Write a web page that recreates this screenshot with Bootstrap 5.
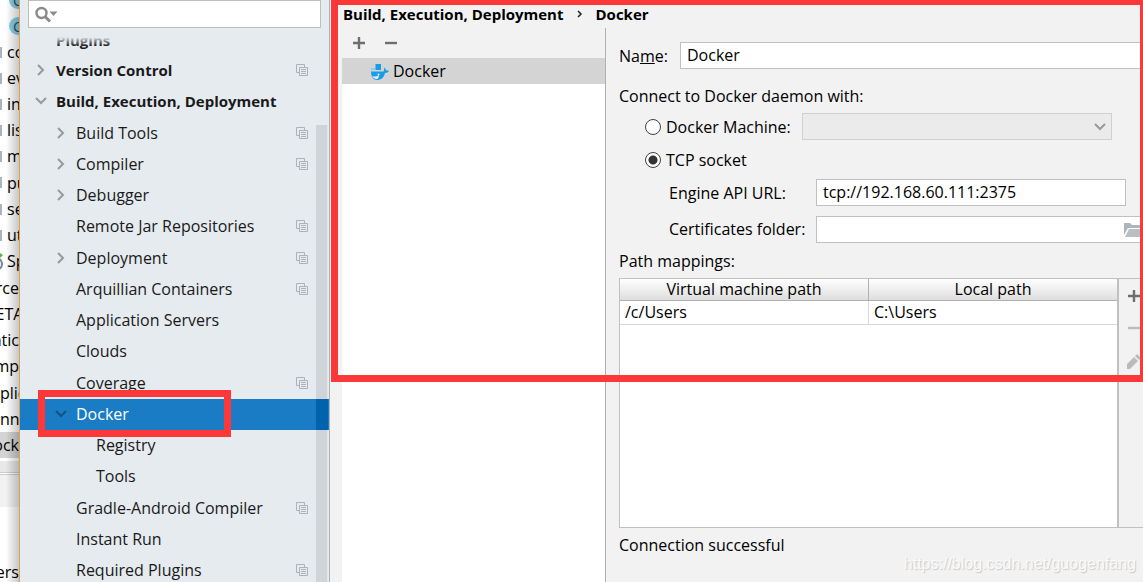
<!DOCTYPE html>
<html lang="en">
<head>
<meta charset="utf-8">
<meta name="viewport" content="width=device-width, initial-scale=1">
<title>Settings - Docker</title>
<link href="https://cdn.jsdelivr.net/npm/bootstrap@5.3.0/dist/css/bootstrap.min.css" rel="stylesheet">
<style>
  body { font: 16px/24px "Open Sans", "Noto Sans", sans-serif; color: #000; background: #f2f2f2; }
  a { color: inherit; text-decoration: none; }
  svg { display: block; flex: none; }

  /* project window behind the dialog */
  .backdrop-strip { width: 20px; border-right: 1px solid #d9a35c; background: #fff; }
  .backdrop-strip::after { content: ""; position: absolute; inset: 0; background: linear-gradient(to right, transparent 30%, rgba(0,0,0,.22)); }
  .file-row { height: 26px; white-space: nowrap; overflow: hidden; }
  .file-row.roomy { height: 27px; }
  .file-row.cut { justify-content: flex-end; }
  .file-row.picked { background: #d4d4d4; }
  .file-row.tail { margin-top: 52px; }
  .folder-edge { width: 2px; height: 11px; background: #a9b4bd; margin-right: 5px; flex: none; }
  .class-dot { width: 18px; height: 18px; border-radius: 50%; background: #86cfe6; margin-left: 9px; flex: none; font-size: 15px; line-height: 18px; padding-left: 4px; color: #3a4a52; }
  .first-class { height: 13px; }
  .strip-bar { height: 12px; background: #e8e8e8; border-bottom: 1px solid #ccc; margin-top: 3px; }
  .strip-tools { height: 33px; background: #f2f2f2; border-top: 1px solid #ccc; margin-top: 1px; }

  /* settings tree */
  .settings-nav { width: 310px; background: #e6ebef; border-right: 1px solid #b0b3b6; }
  .search-box { height: 28px; margin: 0 8px; background: #fff; border: 1px solid #bcbfc1; padding-left: 6px; }
  .search-box input { border: 0; outline: 0; background: none; min-width: 0; flex: 1; }
  .tree { margin: 9px 0 0; color: #1a1a1a; }
  .tree a { height: 31px; line-height: 28px; padding: 0 21px 1px 36px; }
  .tree li:nth-child(4n) a { height: 32px; }
  .tree li.sub a { padding-left: 56px; }
  .tree li.subsub a { padding-left: 76px; }
  .tree .twist { width: 16px; margin-left: -21px; margin-right: 5px; color: #999; }
  .tree li.fw-bold, .crumbs { font-size: 15px; }
  .tree li.clipped a { height: 18px; align-items: flex-end !important; overflow: hidden; }
  .tree li.clipped::after { content: ""; position: absolute; inset: 0; background: linear-gradient(#e6ebef, transparent 50%); }
  .tree li.current { background: #1a7cc4; color: #fff; }
  .tree li.current .twist { color: #15527f; }
  .scroll-thumb { right: 1px; top: 125px; bottom: 0; width: 12px; background: rgba(160,165,168,.32); border-right: 1px solid rgba(255,255,255,.4); }
  .tree li.current::after { content: ""; position: absolute; right: 1px; top: 0; bottom: 0; width: 12px; background: #0063ad; z-index: 2; }

  /* red marker frames */
  .frame { border: 7px solid #fc3838; pointer-events: none; z-index: 5; }
  .frame-item { left: 18px; top: -9px; width: 193px; height: 47px; }
  .frame-main { left: 1px; right: 0; top: 0; height: 382px; border-width: 5px 3px 7px 7px; }

  .crumbs { height: 28px; padding-left: 13px; font-weight: 700; gap: 13px; }
  .master { width: 264px; margin-left: 12px; background: #fff; border-right: 1px solid #b0b0b0; }
  .master-tools { height: 30px; background: #f2f2f2; padding-left: 11px; gap: 20px; color: #6e6e6e; }
  .plain { border: 0; background: none; padding: 0; color: inherit; }
  .master-item { height: 26px; background: #d4d4d4; padding-left: 29px; gap: 4px; }

  .detail { padding: 14px 0 0 13px; min-width: 0; }
  .field, .combo { height: 27px; border: 1px solid #c0c0c0; border-radius: 0; background-color: #fff; padding: 0 6px 1px; font: inherit; color: #000; min-width: 0; flex: 1; }
  .combo { border-color: #d0d0d0; margin-right: 31px; appearance: none;
    background: #ebebeb url("data:image/svg+xml,%3Csvg xmlns='http://www.w3.org/2000/svg' width='12' height='8'%3E%3Cpath d='M1 1l5 5 5-5' fill='none' stroke='%23999' stroke-width='2'/%3E%3C/svg%3E") no-repeat right 5px center; opacity: 1; }
  .name-label { width: 61px; }
  .daemon-caption { margin-top: 15px; }
  .radio-row { height: 27px; padding-left: 26px; margin-top: 5px; }
  .radio-row + .radio-row, .engine-row { margin-top: 6px; }
  .cert-row { margin-top: 10px; }
  .cert-row label { padding-bottom: 1px; }
  .radio-row input { appearance: none; width: 16px; height: 16px; margin: 0 5px 0 0; border: 1px solid #404040; border-radius: 50%; background: #fff; }
  .radio-row input:checked { background: radial-gradient(circle, #333 4px, #fff 5px); }
  .machine-label { width: 136px; }
  .sub-label { width: 197px; padding-left: 50px; }
  .engine { margin-right: 17px; }
  .browse { right: 0; top: 6px; width: 19px; overflow: hidden; }
  .map-caption { margin-top: 6px; }

  .mappings { height: 250px; border: 1px solid #c0c0c0; border-right: 0; margin-top: 5px; }
  .map-table { background: #fff; border-right: 2px solid #c0c0c0; }
  .map-table table { width: 100%; table-layout: fixed; line-height: 20px; }
  .map-table th { height: 21px; padding: 0; font-weight: 400; text-align: center; background: linear-gradient(#fff, #dedede); border-bottom: 1px solid #b0b0b0; }
  .map-table td { height: 24px; padding: 1px 5px 2px; border-bottom: 1px solid #d8d8d8; }
  .map-table th + th { border-left: 1px solid #b0b0b0; }
  .map-table td + td { border-left: 1px solid #d8d8d8; }
  .map-tools { width: 24px; padding: 11px 0 0 8px; gap: 20px; overflow: hidden; color: #bbb; }
  .map-tools .ready { color: #6e6e6e; }
  .status { margin-top: 5px; }
  .watermark { right: 7px; bottom: 6px; font: 16px/24px "Liberation Sans", sans-serif; color: #fafafa; text-shadow: 1px 1px 1px #c8c8c8; }
</style>
</head>
<body>
<svg width="0" height="0" class="position-absolute" aria-hidden="true">
  <symbol id="chev-right" viewBox="0 0 12 12"><path d="M3 1l5 5-5 5" fill="none" stroke="#999" stroke-width="2"/></symbol>
  <symbol id="chev-down" viewBox="0 0 12 12"><path d="M1 3l5 5 5-5" fill="none" stroke="currentColor" stroke-width="2"/></symbol>
  <symbol id="copy" viewBox="0 0 12 12"><path d="M3 8.500H.500V.500H8.500V3" fill="none" stroke="#aab3ba"/><path d="M3.500 3.500h8v8h-8z" fill="#e6ebef" stroke="#aab3ba"/><path d="M5 5.500h5M5 7.500h5M5 9.500h5" stroke="#aab3ba"/></symbol>
  <symbol id="plus" viewBox="0 0 12 12"><path d="M0 6h12M6 0v12" stroke="currentColor" stroke-width="2.400"/></symbol>
  <symbol id="minus" viewBox="0 0 12 12"><path d="M0 6h12" stroke="currentColor" stroke-width="2.400"/></symbol>
</svg>

<div class="d-flex vh-100 overflow-hidden">
  <aside class="backdrop-strip position-relative flex-shrink-0 overflow-hidden" aria-hidden="true">
    <div class="file-row first-class d-flex align-items-end"><span class="class-dot mb-1">C</span></div>
    <div class="file-row d-flex align-items-center"><span class="class-dot">C</span></div>
    <div class="file-row d-flex align-items-center"><i class="folder-edge"></i>co</div>
    <div class="file-row d-flex align-items-center"><i class="folder-edge"></i>ev</div>
    <div class="file-row d-flex align-items-center"><i class="folder-edge"></i>in</div>
    <div class="file-row d-flex align-items-center"><i class="folder-edge"></i>lis</div>
    <div class="file-row d-flex align-items-center"><i class="folder-edge"></i>m</div>
    <div class="file-row d-flex align-items-center roomy"><i class="folder-edge"></i>pu</div>
    <div class="file-row d-flex align-items-center"><i class="folder-edge"></i>se</div>
    <div class="file-row d-flex align-items-center"><i class="folder-edge"></i>ut</div>
    <div class="file-row d-flex align-items-center">
      <svg width="3" height="18" class="me-1"><path d="M0 1l3 2-3 3z" fill="#62b543"/><path d="M0 7q4 5 0 10" fill="none" stroke="#7a8b99" stroke-width="2"/></svg>Sp</div>
    <div class="file-row d-flex align-items-center cut roomy">rce</div>
    <div class="file-row d-flex align-items-center justify-content-center">ETA</div>
    <div class="file-row d-flex align-items-center cut">atic</div>
    <div class="file-row d-flex align-items-center cut">mp</div>
    <div class="file-row d-flex align-items-center roomy">plic</div>
    <div class="file-row d-flex align-items-center">nne</div>
    <div class="file-row d-flex align-items-center cut picked">ock</div>
    <div class="strip-bar"></div>
    <div class="strip-tools"></div>
    <div class="file-row d-flex align-items-center cut tail">ers</div>
  </aside>

  <nav class="settings-nav position-relative flex-shrink-0 overflow-hidden" aria-label="Settings">
    <label class="search-box d-flex align-items-center">
      <svg width="24" height="18" viewBox="0 0 24 18"><circle cx="6.500" cy="8" r="5" fill="none" stroke="#8a8a8a" stroke-width="2.400"/><path d="M10 11.500l5 5" stroke="#8a8a8a" stroke-width="3"/><path d="M14.500 6.500h8l-4 4.500z" fill="#8a8a8a"/></svg>
      <input type="text" aria-label="Search settings">
    </label>
    <ul class="tree list-unstyled">
      <li class="clipped position-relative fw-bold"><a href="#" class="d-flex align-items-center">Plugins</a></li>
      <li class="fw-bold"><a href="#" class="d-flex align-items-center"><span class="twist"><svg width="12" height="12"><use href="#chev-right"/></svg></span>Version Control<svg class="ms-auto" width="12" height="12"><use href="#copy"/></svg></a></li>
      <li class="fw-bold"><a href="#" class="d-flex align-items-center"><span class="twist"><svg width="12" height="12"><use href="#chev-down"/></svg></span>Build, Execution, Deployment</a></li>
      <li class="sub"><a href="#" class="d-flex align-items-center"><span class="twist"><svg width="12" height="12"><use href="#chev-right"/></svg></span>Build Tools<svg class="ms-auto" width="12" height="12"><use href="#copy"/></svg></a></li>
      <li class="sub"><a href="#" class="d-flex align-items-center"><span class="twist"><svg width="12" height="12"><use href="#chev-right"/></svg></span>Compiler<svg class="ms-auto" width="12" height="12"><use href="#copy"/></svg></a></li>
      <li class="sub"><a href="#" class="d-flex align-items-center"><span class="twist"><svg width="12" height="12"><use href="#chev-right"/></svg></span>Debugger</a></li>
      <li class="sub"><a href="#" class="d-flex align-items-center">Remote Jar Repositories<svg class="ms-auto" width="12" height="12"><use href="#copy"/></svg></a></li>
      <li class="sub"><a href="#" class="d-flex align-items-center"><span class="twist"><svg width="12" height="12"><use href="#chev-right"/></svg></span>Deployment<svg class="ms-auto" width="12" height="12"><use href="#copy"/></svg></a></li>
      <li class="sub"><a href="#" class="d-flex align-items-center">Arquillian Containers<svg class="ms-auto" width="12" height="12"><use href="#copy"/></svg></a></li>
      <li class="sub"><a href="#" class="d-flex align-items-center">Application Servers</a></li>
      <li class="sub"><a href="#" class="d-flex align-items-center">Clouds</a></li>
      <li class="sub"><a href="#" class="d-flex align-items-center">Coverage<svg class="ms-auto" width="12" height="12"><use href="#copy"/></svg></a></li>
      <li class="sub current position-relative"><a href="#" class="d-flex align-items-center" aria-current="page"><span class="twist"><svg width="12" height="12"><use href="#chev-down"/></svg></span>Docker</a><div class="frame frame-item position-absolute"></div></li>
      <li class="subsub"><a href="#" class="d-flex align-items-center">Registry</a></li>
      <li class="subsub"><a href="#" class="d-flex align-items-center">Tools</a></li>
      <li class="sub"><a href="#" class="d-flex align-items-center">Gradle-Android Compiler<svg class="ms-auto" width="12" height="12"><use href="#copy"/></svg></a></li>
      <li class="sub"><a href="#" class="d-flex align-items-center">Instant Run</a></li>
      <li class="sub"><a href="#" class="d-flex align-items-center">Required Plugins<svg class="ms-auto" width="12" height="12"><use href="#copy"/></svg></a></li>
    </ul>
    <div class="scroll-thumb position-absolute"></div>
  </nav>

  <main class="position-relative flex-grow-1 d-flex flex-column overflow-hidden">
    <div class="crumbs d-flex align-items-center flex-shrink-0">Build, Execution, Deployment
      <svg width="6" height="8" viewBox="0 0 6 8"><path d="M1 1l3 3-3 3" fill="none" stroke="#222" stroke-width="1.500"/></svg>Docker</div>
    <div class="d-flex flex-grow-1">
      <section class="master flex-shrink-0">
        <div class="master-tools d-flex align-items-center">
          <button class="plain" aria-label="Add"><svg width="12" height="12"><use href="#plus"/></svg></button>
          <button class="plain" aria-label="Remove"><svg width="12" height="12"><use href="#minus"/></svg></button>
        </div>
        <a href="#" class="master-item d-flex align-items-center">
          <svg width="18" height="18" viewBox="0 -2 18 18"><path d="M4.500 0h5.500v6H4.500z" fill="#1a9be8"/><path d="M0 4h4v2H0z" fill="#8dcdf3"/><path d="M0 7.500h12.500q1-1.500.500-4 2 1 2 3 1.500-.500 3 .500-1 2-4 2-1.500 7-7.500 7Q0 16 0 7.500z" fill="#1a9be8"/><path d="M1 12q4 1.500 7-1 0 3-2 4-3 .500-5-3z" fill="#e6f4fc"/><circle cx="7.500" cy="10.500" r="1" fill="#fff"/></svg>Docker</a>
      </section>

      <section class="detail flex-grow-1">
        <div class="d-flex align-items-center">
          <label class="name-label" for="name">Na<u>m</u>e:</label>
          <input class="field" id="name" type="text" value="Docker">
        </div>
        <div class="daemon-caption">Connect to Docker daemon with:</div>
        <div class="radio-row d-flex align-items-center">
          <input type="radio" name="mode" id="machine"><label class="machine-label" for="machine">Docker Machine:</label>
          <select class="combo" aria-label="Docker Machine" disabled><option></option></select>
        </div>
        <div class="radio-row d-flex align-items-center">
          <input type="radio" name="mode" id="tcp" checked><label for="tcp">TCP socket</label>
        </div>
        <div class="d-flex align-items-center engine-row">
          <label class="sub-label" for="url">Engine API URL:</label>
          <input class="field engine" id="url" type="text" value="tcp://192.168.60.111:2375">
        </div>
        <div class="d-flex align-items-center position-relative cert-row">
          <label class="sub-label" for="cert">Certificates folder:</label>
          <input class="field" id="cert" type="text">
          <button class="plain browse position-absolute" aria-label="Browse"><svg width="20" height="16" viewBox="0 0 20 16"><path d="M0 1h6l2 2h9v3H4l-4 7z" fill="#aeb6bc"/><path d="M5 7h15l-4 8H1z" fill="#b9c0c5"/></svg></button>
        </div>
        <div class="map-caption">Path mappings:</div>
        <div class="mappings d-flex">
          <div class="map-table flex-grow-1">
            <table>
              <thead><tr><th>Virtual machine path</th><th>Local path</th></tr></thead>
              <tbody><tr><td>/c/Users</td><td>C:\Users</td></tr></tbody>
            </table>
          </div>
          <div class="map-tools d-flex flex-column flex-shrink-0">
            <button class="plain ready" aria-label="Add mapping"><svg width="14" height="12"><use href="#plus"/></svg></button>
            <button class="plain" aria-label="Remove mapping"><svg width="14" height="12"><use href="#minus"/></svg></button>
            <button class="plain" aria-label="Edit mapping"><svg width="16" height="16" viewBox="1 1 16 16"><path d="M0 12v4h4l8-8-4-4zM9 3l2-2 4 4-2 2z" fill="#bbb"/></svg></button>
          </div>
        </div>
        <div class="status">Connection successful</div>
      </section>
    </div>
    <div class="frame frame-main position-absolute"></div>
    <div class="watermark position-absolute">https://blog.csdn.net/guogenfang</div>
  </main>
</div>
<script src="https://cdn.jsdelivr.net/npm/bootstrap@5.3.0/dist/js/bootstrap.bundle.min.js"></script>
</body>
</html>
